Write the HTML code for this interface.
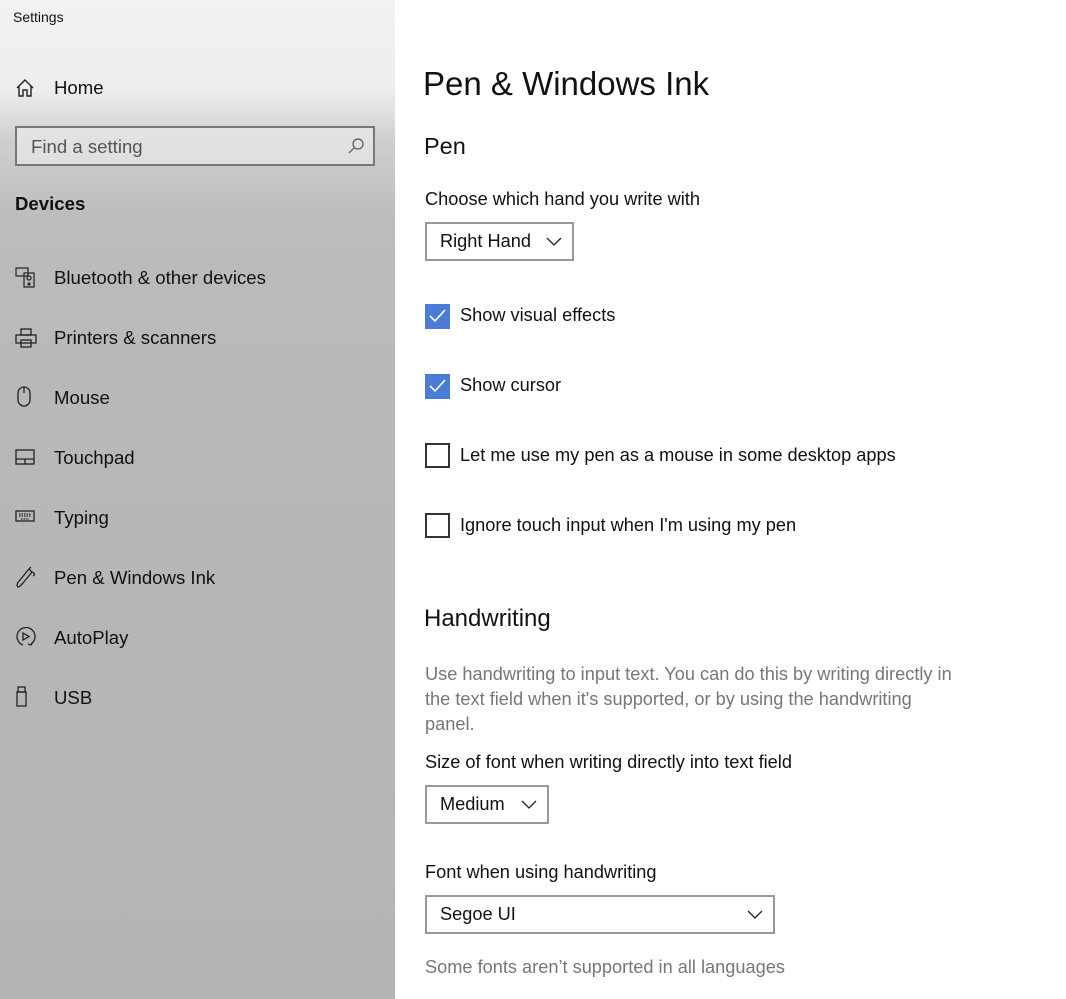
<!DOCTYPE html>
<html><head><meta charset="utf-8"><style>
*{margin:0;padding:0;box-sizing:border-box}
body{width:1066px;height:999px;overflow:hidden;font-family:"Liberation Sans",sans-serif;color:#000;background:#fff;position:relative}
#side{position:absolute;left:0;top:0;width:395px;height:999px;background:linear-gradient(180deg,#f2f2f4 0px,#ededef 90px,#cfcfd0 140px,#bcbcbd 220px,#b8b8b8 400px,#b6b6b6 700px,#b3b4b5 999px)}
.abs{position:absolute;white-space:nowrap}
.nav{position:absolute;left:54px;font-size:18.6px;color:#111}
.ic{position:absolute;left:15px}
.h{font-size:18.2px;color:#111}
.cb{position:absolute;left:425px;width:25px;height:25px;border:2px solid #333}
.cb.on{background:#4a7cd6;border-color:#4a7cd6}
.dd{position:absolute;left:425px;border:2px solid #999;height:39px;font-size:18.2px;padding:7px 0 0 13px;color:#111}
.dd svg{position:absolute;right:10px;top:13px}
</style></head><body>
<div id="side">
<div class="abs" style="left:13px;top:9px;font-size:14px;color:#111">Settings</div>
<svg class="ic" style="top:78px" width="20" height="20" viewBox="0 0 20 20" fill="none" stroke="#222" stroke-width="1.4"><path d="M2 10 L10 2 L18 10 M4 8 V18 H8 V12 H12 V18 H16 V8"/></svg>
<div class="nav" style="top:77px">Home</div>
<div class="abs" style="left:15px;top:126px;width:360px;height:40px;border:2px solid #777;background:rgba(240,240,240,.55)"></div>
<div class="abs" style="left:31px;top:136px;font-size:18.6px;color:#555">Find a setting</div>
<svg class="abs" style="left:347px;top:137px" width="18" height="18" viewBox="0 0 18 18" fill="none" stroke="#555" stroke-width="1.2"><circle cx="11" cy="7" r="5"/><path d="M7.5 10.5 L2 16"/></svg>
<div class="abs" style="left:15px;top:193px;font-size:18.6px;font-weight:bold;color:#111">Devices</div>

<svg class="ic" style="top:267px" width="22" height="22" viewBox="0 0 22 22" fill="none" stroke="#222" stroke-width="1.2"><rect x="1" y="1" width="12" height="8"/><rect x="9" y="6" width="10" height="14"/><circle cx="14" cy="11" r="2"/><circle cx="14" cy="17" r="1"/></svg>
<div class="nav" style="top:267px">Bluetooth &amp; other devices</div>
<svg class="ic" style="top:327px" width="22" height="22" viewBox="0 0 22 22" fill="none" stroke="#222" stroke-width="1.3"><rect x="6" y="2" width="10" height="6"/><rect x="1" y="8" width="20" height="8"/><rect x="6" y="13" width="10" height="7"/></svg>
<div class="nav" style="top:327px">Printers &amp; scanners</div>
<svg class="ic" style="top:386px" width="22" height="22" viewBox="0 0 22 22" fill="none" stroke="#222" stroke-width="1.3"><rect x="3" y="1" width="12" height="19" rx="6"/><path d="M9 1V7"/></svg>
<div class="nav" style="top:387px">Mouse</div>
<svg class="ic" style="top:448px" width="22" height="20" viewBox="0 0 22 20" fill="none" stroke="#222" stroke-width="1.3"><rect x="1" y="2" width="18" height="14"/><path d="M1 11H19M10 11V16"/></svg>
<div class="nav" style="top:447px">Touchpad</div>
<svg class="ic" style="top:509px" width="22" height="16" viewBox="0 0 22 16" fill="none" stroke="#222" stroke-width="1.3"><rect x="1" y="2" width="18" height="10"/><path d="M4 5H16M4 7H16M6 10H14" stroke-dasharray="1.5 1"/></svg>
<div class="nav" style="top:507px">Typing</div>
<svg class="ic" style="top:565px" width="22" height="24" viewBox="0 0 22 24" fill="none" stroke="#222" stroke-width="1.3"><path d="M3 22 C1 20 3 17 5 15 L14 4 L17 7 L8 18 C6 20 5 22 3 22Z M14 4 L16 2 M17 7 C20 8 20 10 18 11"/></svg>
<div class="nav" style="top:567px">Pen &amp; Windows Ink</div>
<svg class="ic" style="top:626px" width="22" height="24" viewBox="0 0 22 24" fill="none" stroke="#222" stroke-width="1.3"><path d="M16 18 A9 9 0 1 0 8 19"/><path d="M8 7 L14 10.5 L8 14Z"/><path d="M18 16 L16 19 L13 18"/></svg>
<div class="nav" style="top:627px">AutoPlay</div>
<svg class="ic" style="top:686px" width="22" height="22" viewBox="0 0 22 22" fill="none" stroke="#222" stroke-width="1.3"><rect x="3" y="1" width="7" height="5"/><rect x="2" y="6" width="9" height="14"/></svg>
<div class="nav" style="top:687px">USB</div>
</div>

<div class="abs" style="left:423px;top:65px;font-size:33px;color:#111">Pen &amp; Windows Ink</div>
<div class="abs" style="left:424px;top:133px;font-size:23.5px;color:#111">Pen</div>
<div class="abs h" style="left:425px;top:189px">Choose which hand you write with</div>
<div class="dd" style="top:222px;width:149px">Right Hand<svg width="16" height="10" viewBox="0 0 16 10" fill="none" stroke="#222" stroke-width="1.3"><path d="M1 1L8 8L15 1"/></svg></div>

<div class="cb on" style="top:304px"><svg width="21" height="21" viewBox="0 0 21 21" fill="none" stroke="#fff" stroke-width="1.6"><path d="M3 10L8 15L18 4"/></svg></div>
<div class="abs h" style="left:460px;top:305px">Show visual effects</div>
<div class="cb on" style="top:374px"><svg width="21" height="21" viewBox="0 0 21 21" fill="none" stroke="#fff" stroke-width="1.6"><path d="M3 10L8 15L18 4"/></svg></div>
<div class="abs h" style="left:460px;top:375px">Show cursor</div>
<div class="cb" style="top:443px"></div>
<div class="abs h" style="left:460px;top:445px">Let me use my pen as a mouse in some desktop apps</div>
<div class="cb" style="top:513px"></div>
<div class="abs h" style="left:460px;top:515px">Ignore touch input when I'm using my pen</div>

<div class="abs" style="left:424px;top:605px;font-size:24px;color:#111">Handwriting</div>
<div class="abs" style="left:425px;top:662px;font-size:18.2px;color:#777;line-height:25px">Use handwriting to input text. You can do this by writing directly in<br>the text field when it's supported, or by using the handwriting<br>panel.</div>
<div class="abs h" style="left:425px;top:752px">Size of font when writing directly into text field</div>
<div class="dd" style="top:785px;width:124px">Medium<svg width="16" height="10" viewBox="0 0 16 10" fill="none" stroke="#222" stroke-width="1.3"><path d="M1 1L8 8L15 1"/></svg></div>
<div class="abs h" style="left:425px;top:862px">Font when using handwriting</div>
<div class="dd" style="top:895px;width:350px">Segoe UI<svg width="16" height="10" viewBox="0 0 16 10" fill="none" stroke="#222" stroke-width="1.3"><path d="M1 1L8 8L15 1"/></svg></div>
<div class="abs" style="left:425px;top:957px;font-size:18.2px;color:#777">Some fonts aren’t supported in all languages</div>
</body></html>
